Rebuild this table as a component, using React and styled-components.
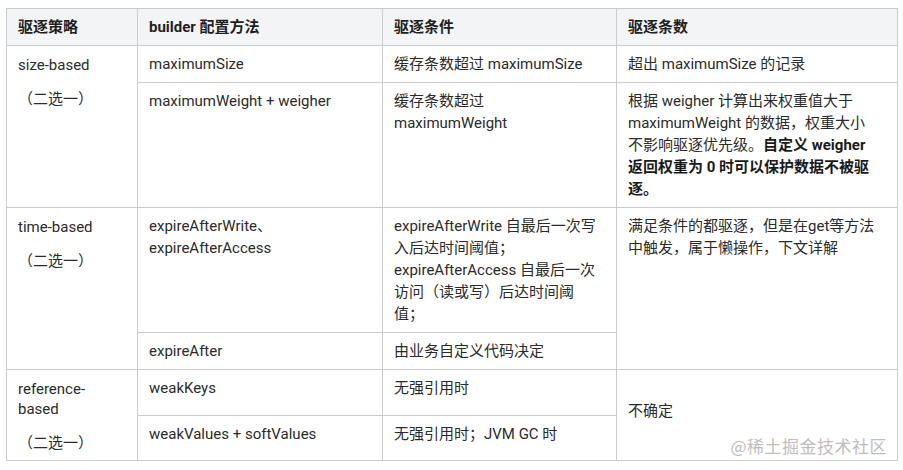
import React from "react";
import styled, { createGlobalStyle } from "styled-components";

const Global = createGlobalStyle`
  html, body { margin: 0; padding: 0; background: #fff; }
  body {
    font-family: Roboto, "Noto Sans CJK SC", sans-serif;
    font-size: 15px;
    color: #2b2b2b;
  }
`;

const Page = styled.div`
  position: relative;
  padding: 8px 6px 0 6px;
  width: 903px;
  height: 470px;
  box-sizing: border-box;
`;

const Table = styled.table`
  border-collapse: collapse;
  table-layout: fixed;
  width: 891px;
  line-height: 22px;
`;

const Th = styled.th`
  background: #f3f4f5;
  border: 1px solid #c9cccf;
  padding: 7px 12px 7px 11px;
  text-align: left;
  font-weight: 700;
  color: #1f1f1f;
`;

const Td = styled.td`
  border: 1px solid #c9cccf;
  padding: 7px 12px 7px 11px;
  vertical-align: top;
  text-align: left;
`;

const LabelCell = styled(Td)`
  padding-top: 9px;
  line-height: 20px;
`;

const MiddleCell = styled(Td)`
  vertical-align: middle;
  padding-bottom: 16px;
`;

const Note = styled.div`
  margin-top: 14px;
`;

const Strong = styled.strong`
  font-weight: 700;
  color: #1a1a1a;
`;

const Watermark = styled.div`
  position: absolute;
  right: 16px;
  bottom: 12px;
  font-family: "Noto Sans CJK SC", sans-serif;
  font-size: 17px;
  color: #bdbdbd;
  letter-spacing: 0.5px;
  text-shadow: 0 0 1px #fff;
`;

export default function App() {
  return (
    <>
      <Global />
      <Page>
        <Table>
          <colgroup>
            <col style={{ width: 131 }} />
            <col style={{ width: 245 }} />
            <col style={{ width: 234 }} />
            <col style={{ width: 281 }} />
          </colgroup>
          <thead>
            <tr>
              <Th>驱逐策略</Th>
              <Th>builder 配置方法</Th>
              <Th>驱逐条件</Th>
              <Th>驱逐条数</Th>
            </tr>
          </thead>
          <tbody>
            <tr>
              <LabelCell rowSpan={2}>
                size-based
                <Note>（二选一）</Note>
              </LabelCell>
              <Td>maximumSize</Td>
              <Td>缓存条数超过 maximumSize</Td>
              <Td>超出 maximumSize 的记录</Td>
            </tr>
            <tr>
              <Td>maximumWeight + weigher</Td>
              <Td>
                缓存条数超过
                <br />
                maximumWeight
              </Td>
              <Td>
                根据 weigher 计算出来权重值大于
                <br />
                maximumWeight 的数据，权重大小
                <br />
                不影响驱逐优先级。<Strong>自定义 weigher</Strong>
                <br />
                <Strong>
                  返回权重为 0 时可以保护数据不被驱
                  <br />
                  逐。
                </Strong>
              </Td>
            </tr>
            <tr>
              <LabelCell rowSpan={2}>
                time-based
                <Note>（二选一）</Note>
              </LabelCell>
              <Td>
                expireAfterWrite、
                <br />
                expireAfterAccess
              </Td>
              <Td>
                expireAfterWrite 自最后一次写
                <br />
                入后达时间阈值；
                <br />
                expireAfterAccess 自最后一次
                <br />
                访问（读或写）后达时间阈
                <br />
                值；
              </Td>
              <Td rowSpan={2}>
                满足条件的都驱逐，但是在get等方法
                <br />
                中触发，属于懒操作，下文详解
              </Td>
            </tr>
            <tr>
              <Td>expireAfter</Td>
              <Td>由业务自定义代码决定</Td>
            </tr>
            <tr>
              <LabelCell rowSpan={2}>
                reference-
                <br />
                based
                <Note>（二选一）</Note>
              </LabelCell>
              <Td>weakKeys</Td>
              <Td>无强引用时</Td>
              <MiddleCell rowSpan={2}>不确定</MiddleCell>
            </tr>
            <tr>
              <Td>weakValues + softValues</Td>
              <Td>无强引用时；JVM GC 时</Td>
            </tr>
          </tbody>
        </Table>
        <Watermark>@稀土掘金技术社区</Watermark>
      </Page>
    </>
  );
}
